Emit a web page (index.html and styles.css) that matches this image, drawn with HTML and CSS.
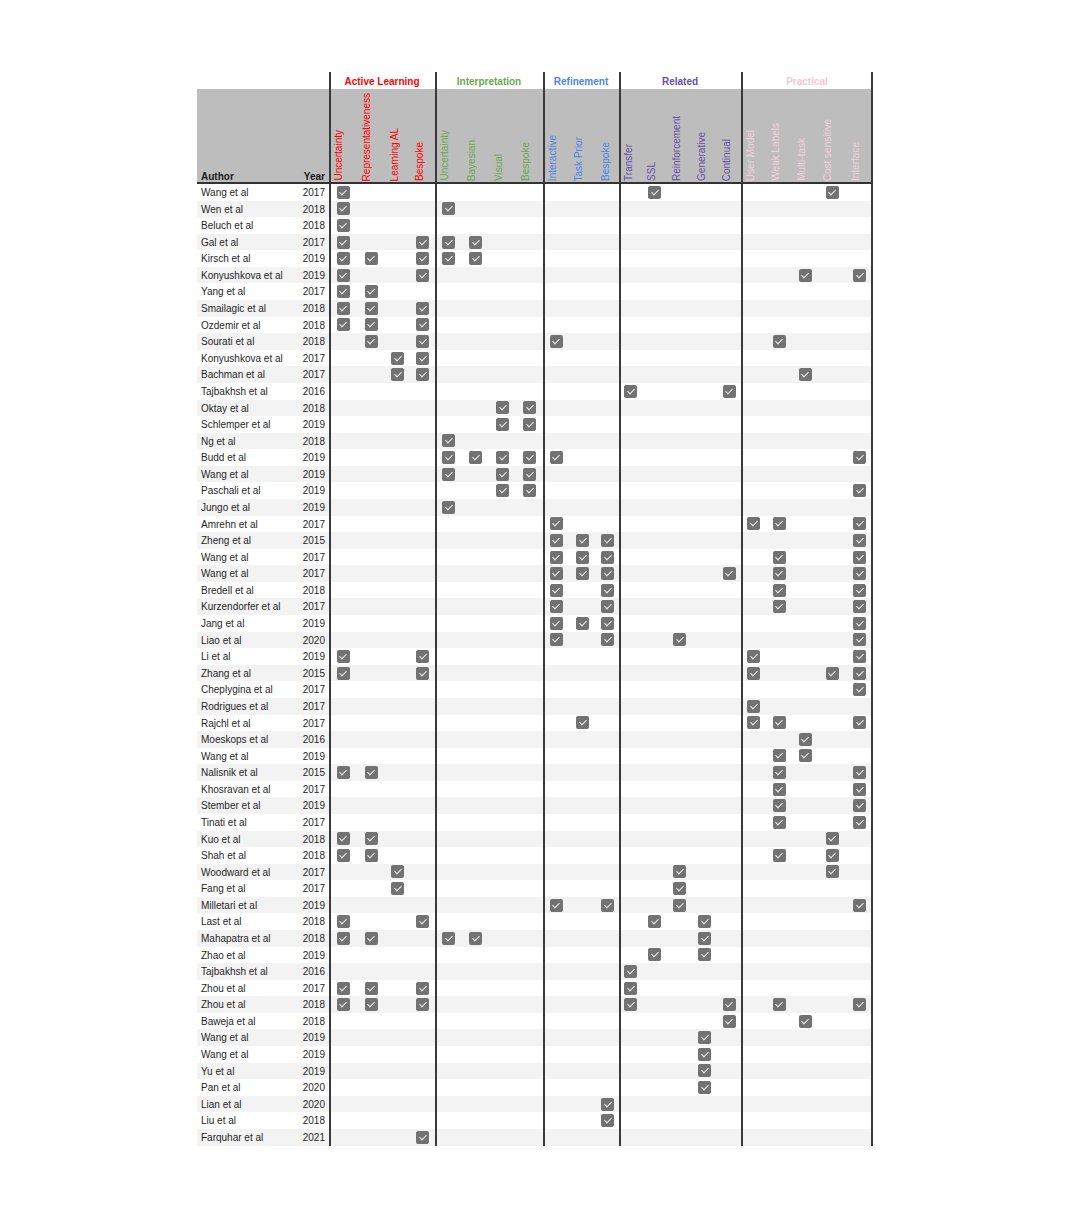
FILE: index.html
```html
<!DOCTYPE html>
<html>
<head>
<meta charset="utf-8">
<link rel="stylesheet" href="styles.css">
</head>
<body>
<div class="page">
<div class="table">
  <div class="tt">
    <span></span><span></span>
    <div class="g al"><span>Active Learning</span></div>
    <div class="g in"><span>Interpretation</span></div>
    <div class="g re"><span>Refinement</span></div>
    <div class="g rl"><span>Related</span></div>
    <div class="g pr"><span>Practical</span></div>
  </div>
  <div class="hd">
    <span class="au">Author</span><span class="yr">Year</span>
    <div class="g al"><span><b>Uncertainty</b></span><span><b>Representativeness</b></span><span><b>Learning AL</b></span><span><b>Bespoke</b></span></div>
    <div class="g in"><span><b>Uncertainty</b></span><span><b>Bayesian</b></span><span><b>Visual</b></span><span><b>Bespoke</b></span></div>
    <div class="g re"><span><b>Interactive</b></span><span><b>Task Prior</b></span><span><b>Bespoke</b></span></div>
    <div class="g rl"><span><b>Transfer</b></span><span><b>SSL</b></span><span><b>Reinforcement</b></span><span><b>Generative</b></span><span><b>Continual</b></span></div>
    <div class="g pr"><span><b>User Model</b></span><span><b>Weak Labels</b></span><span><b>Multi-task</b></span><span><b>Cost sensitive</b></span><span><b>Interface</b></span></div>
  </div>
  <div class="body">
    <div class="row"><span class="au">Wang et al</span><span class="yr">2017</span><div class="g al"><i class="k c1"></i></div><div class="g in"></div><div class="g re"></div><div class="g rl"><i class="k c2"></i></div><div class="g pr"><i class="k c4"></i></div></div>
    <div class="row"><span class="au">Wen et al</span><span class="yr">2018</span><div class="g al"><i class="k c1"></i></div><div class="g in"><i class="k c1"></i></div><div class="g re"></div><div class="g rl"></div><div class="g pr"></div></div>
    <div class="row"><span class="au">Beluch et al</span><span class="yr">2018</span><div class="g al"><i class="k c1"></i></div><div class="g in"></div><div class="g re"></div><div class="g rl"></div><div class="g pr"></div></div>
    <div class="row"><span class="au">Gal et al</span><span class="yr">2017</span><div class="g al"><i class="k c1"></i><i class="k c4"></i></div><div class="g in"><i class="k c1"></i><i class="k c2"></i></div><div class="g re"></div><div class="g rl"></div><div class="g pr"></div></div>
    <div class="row"><span class="au">Kirsch et al</span><span class="yr">2019</span><div class="g al"><i class="k c1"></i><i class="k c2"></i><i class="k c4"></i></div><div class="g in"><i class="k c1"></i><i class="k c2"></i></div><div class="g re"></div><div class="g rl"></div><div class="g pr"></div></div>
    <div class="row"><span class="au">Konyushkova et al</span><span class="yr">2019</span><div class="g al"><i class="k c1"></i><i class="k c4"></i></div><div class="g in"></div><div class="g re"></div><div class="g rl"></div><div class="g pr"><i class="k c3"></i><i class="k c5"></i></div></div>
    <div class="row"><span class="au">Yang et al</span><span class="yr">2017</span><div class="g al"><i class="k c1"></i><i class="k c2"></i></div><div class="g in"></div><div class="g re"></div><div class="g rl"></div><div class="g pr"></div></div>
    <div class="row"><span class="au">Smailagic et al</span><span class="yr">2018</span><div class="g al"><i class="k c1"></i><i class="k c2"></i><i class="k c4"></i></div><div class="g in"></div><div class="g re"></div><div class="g rl"></div><div class="g pr"></div></div>
    <div class="row"><span class="au">Ozdemir et al</span><span class="yr">2018</span><div class="g al"><i class="k c1"></i><i class="k c2"></i><i class="k c4"></i></div><div class="g in"></div><div class="g re"></div><div class="g rl"></div><div class="g pr"></div></div>
    <div class="row"><span class="au">Sourati et al</span><span class="yr">2018</span><div class="g al"><i class="k c2"></i><i class="k c4"></i></div><div class="g in"></div><div class="g re"><i class="k c1"></i></div><div class="g rl"></div><div class="g pr"><i class="k c2"></i></div></div>
    <div class="row"><span class="au">Konyushkova et al</span><span class="yr">2017</span><div class="g al"><i class="k c3"></i><i class="k c4"></i></div><div class="g in"></div><div class="g re"></div><div class="g rl"></div><div class="g pr"></div></div>
    <div class="row"><span class="au">Bachman et al</span><span class="yr">2017</span><div class="g al"><i class="k c3"></i><i class="k c4"></i></div><div class="g in"></div><div class="g re"></div><div class="g rl"></div><div class="g pr"><i class="k c3"></i></div></div>
    <div class="row"><span class="au">Tajbakhsh et al</span><span class="yr">2016</span><div class="g al"></div><div class="g in"></div><div class="g re"></div><div class="g rl"><i class="k c1"></i><i class="k c5"></i></div><div class="g pr"></div></div>
    <div class="row"><span class="au">Oktay et al</span><span class="yr">2018</span><div class="g al"></div><div class="g in"><i class="k c3"></i><i class="k c4"></i></div><div class="g re"></div><div class="g rl"></div><div class="g pr"></div></div>
    <div class="row"><span class="au">Schlemper et al</span><span class="yr">2019</span><div class="g al"></div><div class="g in"><i class="k c3"></i><i class="k c4"></i></div><div class="g re"></div><div class="g rl"></div><div class="g pr"></div></div>
    <div class="row"><span class="au">Ng et al</span><span class="yr">2018</span><div class="g al"></div><div class="g in"><i class="k c1"></i></div><div class="g re"></div><div class="g rl"></div><div class="g pr"></div></div>
    <div class="row"><span class="au">Budd et al</span><span class="yr">2019</span><div class="g al"></div><div class="g in"><i class="k c1"></i><i class="k c2"></i><i class="k c3"></i><i class="k c4"></i></div><div class="g re"><i class="k c1"></i></div><div class="g rl"></div><div class="g pr"><i class="k c5"></i></div></div>
    <div class="row"><span class="au">Wang et al</span><span class="yr">2019</span><div class="g al"></div><div class="g in"><i class="k c1"></i><i class="k c3"></i><i class="k c4"></i></div><div class="g re"></div><div class="g rl"></div><div class="g pr"></div></div>
    <div class="row"><span class="au">Paschali et al</span><span class="yr">2019</span><div class="g al"></div><div class="g in"><i class="k c3"></i><i class="k c4"></i></div><div class="g re"></div><div class="g rl"></div><div class="g pr"><i class="k c5"></i></div></div>
    <div class="row"><span class="au">Jungo et al</span><span class="yr">2019</span><div class="g al"></div><div class="g in"><i class="k c1"></i></div><div class="g re"></div><div class="g rl"></div><div class="g pr"></div></div>
    <div class="row"><span class="au">Amrehn et al</span><span class="yr">2017</span><div class="g al"></div><div class="g in"></div><div class="g re"><i class="k c1"></i></div><div class="g rl"></div><div class="g pr"><i class="k c1"></i><i class="k c2"></i><i class="k c5"></i></div></div>
    <div class="row"><span class="au">Zheng et al</span><span class="yr">2015</span><div class="g al"></div><div class="g in"></div><div class="g re"><i class="k c1"></i><i class="k c2"></i><i class="k c3"></i></div><div class="g rl"></div><div class="g pr"><i class="k c5"></i></div></div>
    <div class="row"><span class="au">Wang et al</span><span class="yr">2017</span><div class="g al"></div><div class="g in"></div><div class="g re"><i class="k c1"></i><i class="k c2"></i><i class="k c3"></i></div><div class="g rl"></div><div class="g pr"><i class="k c2"></i><i class="k c5"></i></div></div>
    <div class="row"><span class="au">Wang et al</span><span class="yr">2017</span><div class="g al"></div><div class="g in"></div><div class="g re"><i class="k c1"></i><i class="k c2"></i><i class="k c3"></i></div><div class="g rl"><i class="k c5"></i></div><div class="g pr"><i class="k c2"></i><i class="k c5"></i></div></div>
    <div class="row"><span class="au">Bredell et al</span><span class="yr">2018</span><div class="g al"></div><div class="g in"></div><div class="g re"><i class="k c1"></i><i class="k c3"></i></div><div class="g rl"></div><div class="g pr"><i class="k c2"></i><i class="k c5"></i></div></div>
    <div class="row"><span class="au">Kurzendorfer et al</span><span class="yr">2017</span><div class="g al"></div><div class="g in"></div><div class="g re"><i class="k c1"></i><i class="k c3"></i></div><div class="g rl"></div><div class="g pr"><i class="k c2"></i><i class="k c5"></i></div></div>
    <div class="row"><span class="au">Jang et al</span><span class="yr">2019</span><div class="g al"></div><div class="g in"></div><div class="g re"><i class="k c1"></i><i class="k c2"></i><i class="k c3"></i></div><div class="g rl"></div><div class="g pr"><i class="k c5"></i></div></div>
    <div class="row"><span class="au">Liao et al</span><span class="yr">2020</span><div class="g al"></div><div class="g in"></div><div class="g re"><i class="k c1"></i><i class="k c3"></i></div><div class="g rl"><i class="k c3"></i></div><div class="g pr"><i class="k c5"></i></div></div>
    <div class="row"><span class="au">Li et al</span><span class="yr">2019</span><div class="g al"><i class="k c1"></i><i class="k c4"></i></div><div class="g in"></div><div class="g re"></div><div class="g rl"></div><div class="g pr"><i class="k c1"></i><i class="k c5"></i></div></div>
    <div class="row"><span class="au">Zhang et al</span><span class="yr">2015</span><div class="g al"><i class="k c1"></i><i class="k c4"></i></div><div class="g in"></div><div class="g re"></div><div class="g rl"></div><div class="g pr"><i class="k c1"></i><i class="k c4"></i><i class="k c5"></i></div></div>
    <div class="row"><span class="au">Cheplygina et al</span><span class="yr">2017</span><div class="g al"></div><div class="g in"></div><div class="g re"></div><div class="g rl"></div><div class="g pr"><i class="k c5"></i></div></div>
    <div class="row"><span class="au">Rodrigues et al</span><span class="yr">2017</span><div class="g al"></div><div class="g in"></div><div class="g re"></div><div class="g rl"></div><div class="g pr"><i class="k c1"></i></div></div>
    <div class="row"><span class="au">Rajchl et al</span><span class="yr">2017</span><div class="g al"></div><div class="g in"></div><div class="g re"><i class="k c2"></i></div><div class="g rl"></div><div class="g pr"><i class="k c1"></i><i class="k c2"></i><i class="k c5"></i></div></div>
    <div class="row"><span class="au">Moeskops et al</span><span class="yr">2016</span><div class="g al"></div><div class="g in"></div><div class="g re"></div><div class="g rl"></div><div class="g pr"><i class="k c3"></i></div></div>
    <div class="row"><span class="au">Wang et al</span><span class="yr">2019</span><div class="g al"></div><div class="g in"></div><div class="g re"></div><div class="g rl"></div><div class="g pr"><i class="k c2"></i><i class="k c3"></i></div></div>
    <div class="row"><span class="au">Nalisnik et al</span><span class="yr">2015</span><div class="g al"><i class="k c1"></i><i class="k c2"></i></div><div class="g in"></div><div class="g re"></div><div class="g rl"></div><div class="g pr"><i class="k c2"></i><i class="k c5"></i></div></div>
    <div class="row"><span class="au">Khosravan et al</span><span class="yr">2017</span><div class="g al"></div><div class="g in"></div><div class="g re"></div><div class="g rl"></div><div class="g pr"><i class="k c2"></i><i class="k c5"></i></div></div>
    <div class="row"><span class="au">Stember et al</span><span class="yr">2019</span><div class="g al"></div><div class="g in"></div><div class="g re"></div><div class="g rl"></div><div class="g pr"><i class="k c2"></i><i class="k c5"></i></div></div>
    <div class="row"><span class="au">Tinati et al</span><span class="yr">2017</span><div class="g al"></div><div class="g in"></div><div class="g re"></div><div class="g rl"></div><div class="g pr"><i class="k c2"></i><i class="k c5"></i></div></div>
    <div class="row"><span class="au">Kuo et al</span><span class="yr">2018</span><div class="g al"><i class="k c1"></i><i class="k c2"></i></div><div class="g in"></div><div class="g re"></div><div class="g rl"></div><div class="g pr"><i class="k c4"></i></div></div>
    <div class="row"><span class="au">Shah et al</span><span class="yr">2018</span><div class="g al"><i class="k c1"></i><i class="k c2"></i></div><div class="g in"></div><div class="g re"></div><div class="g rl"></div><div class="g pr"><i class="k c2"></i><i class="k c4"></i></div></div>
    <div class="row"><span class="au">Woodward et al</span><span class="yr">2017</span><div class="g al"><i class="k c3"></i></div><div class="g in"></div><div class="g re"></div><div class="g rl"><i class="k c3"></i></div><div class="g pr"><i class="k c4"></i></div></div>
    <div class="row"><span class="au">Fang et al</span><span class="yr">2017</span><div class="g al"><i class="k c3"></i></div><div class="g in"></div><div class="g re"></div><div class="g rl"><i class="k c3"></i></div><div class="g pr"></div></div>
    <div class="row"><span class="au">Milletari et al</span><span class="yr">2019</span><div class="g al"></div><div class="g in"></div><div class="g re"><i class="k c1"></i><i class="k c3"></i></div><div class="g rl"><i class="k c3"></i></div><div class="g pr"><i class="k c5"></i></div></div>
    <div class="row"><span class="au">Last et al</span><span class="yr">2018</span><div class="g al"><i class="k c1"></i><i class="k c4"></i></div><div class="g in"></div><div class="g re"></div><div class="g rl"><i class="k c2"></i><i class="k c4"></i></div><div class="g pr"></div></div>
    <div class="row"><span class="au">Mahapatra et al</span><span class="yr">2018</span><div class="g al"><i class="k c1"></i><i class="k c2"></i></div><div class="g in"><i class="k c1"></i><i class="k c2"></i></div><div class="g re"></div><div class="g rl"><i class="k c4"></i></div><div class="g pr"></div></div>
    <div class="row"><span class="au">Zhao et al</span><span class="yr">2019</span><div class="g al"></div><div class="g in"></div><div class="g re"></div><div class="g rl"><i class="k c2"></i><i class="k c4"></i></div><div class="g pr"></div></div>
    <div class="row"><span class="au">Tajbakhsh et al</span><span class="yr">2016</span><div class="g al"></div><div class="g in"></div><div class="g re"></div><div class="g rl"><i class="k c1"></i></div><div class="g pr"></div></div>
    <div class="row"><span class="au">Zhou et al</span><span class="yr">2017</span><div class="g al"><i class="k c1"></i><i class="k c2"></i><i class="k c4"></i></div><div class="g in"></div><div class="g re"></div><div class="g rl"><i class="k c1"></i></div><div class="g pr"></div></div>
    <div class="row"><span class="au">Zhou et al</span><span class="yr">2018</span><div class="g al"><i class="k c1"></i><i class="k c2"></i><i class="k c4"></i></div><div class="g in"></div><div class="g re"></div><div class="g rl"><i class="k c1"></i><i class="k c5"></i></div><div class="g pr"><i class="k c2"></i><i class="k c5"></i></div></div>
    <div class="row"><span class="au">Baweja et al</span><span class="yr">2018</span><div class="g al"></div><div class="g in"></div><div class="g re"></div><div class="g rl"><i class="k c5"></i></div><div class="g pr"><i class="k c3"></i></div></div>
    <div class="row"><span class="au">Wang et al</span><span class="yr">2019</span><div class="g al"></div><div class="g in"></div><div class="g re"></div><div class="g rl"><i class="k c4"></i></div><div class="g pr"></div></div>
    <div class="row"><span class="au">Wang et al</span><span class="yr">2019</span><div class="g al"></div><div class="g in"></div><div class="g re"></div><div class="g rl"><i class="k c4"></i></div><div class="g pr"></div></div>
    <div class="row"><span class="au">Yu et al</span><span class="yr">2019</span><div class="g al"></div><div class="g in"></div><div class="g re"></div><div class="g rl"><i class="k c4"></i></div><div class="g pr"></div></div>
    <div class="row"><span class="au">Pan et al</span><span class="yr">2020</span><div class="g al"></div><div class="g in"></div><div class="g re"></div><div class="g rl"><i class="k c4"></i></div><div class="g pr"></div></div>
    <div class="row"><span class="au">Lian et al</span><span class="yr">2020</span><div class="g al"></div><div class="g in"></div><div class="g re"><i class="k c3"></i></div><div class="g rl"></div><div class="g pr"></div></div>
    <div class="row"><span class="au">Liu et al</span><span class="yr">2018</span><div class="g al"></div><div class="g in"></div><div class="g re"><i class="k c3"></i></div><div class="g rl"></div><div class="g pr"></div></div>
    <div class="row"><span class="au">Farquhar et al</span><span class="yr">2021</span><div class="g al"><i class="k c4"></i></div><div class="g in"></div><div class="g re"></div><div class="g rl"></div><div class="g pr"></div></div>
  </div>
</div>
</div>
</body>
</html>
```
FILE: styles.css
```css
* { box-sizing: border-box; margin: 0; padding: 0; }
body {
  background: #fff;
  font-family: "Liberation Sans", Arial, sans-serif;
  font-size: 10px;
  color: #1f1f1f;
}
.page { padding: 72px 0 0 197px; }
.table { width: 676px; }

.tt, .hd, .row {
  display: grid;
  grid-template-columns: 98px 34px 106px 108px 76px 122px 132px;
}

.g { display: grid; box-shadow: inset 2px 0 0 #3a3a3a; }
.g.pr { box-shadow: inset 2px 0 0 #3a3a3a, inset -2px 0 0 #3a3a3a; }
.al { grid-template-columns: 28px 28px 25px 25px; color: #ff0000; }
.in { grid-template-columns: 27px 27px 27px 27px; color: #6aa84f; }
.re { grid-template-columns: 26px 27px 23px; color: #4a86e8; }
.rl { grid-template-columns: 23px 25px 25px 25px 24px; color: #674ea7; }
.pr { grid-template-columns: 25px 26px 26px 28px 27px; color: #f0c6d6; }

/* group titles */
.tt { height: 17px; }
.tt .g { display: flex; align-items: center; justify-content: center; }
.tt .g span { font-weight: bold; line-height: 12px; padding-top: 3px; }
.tt .pr span { color: #efc9d7; }

/* column header */
.hd {
  height: 95px;
  background: #bdbdbd;
  border-bottom: 2px solid #333;
}
.hd .au, .hd .yr {
  align-self: end;
  font-weight: bold;
  line-height: 11px;
  color: #1a1a1a;
}
.hd .g > span {
  display: flex;
  align-items: flex-end;
  padding: 0 0 1px 3.5px;
}
.hd .g > span > b {
  writing-mode: vertical-rl;
  transform: rotate(180deg);
  line-height: 12px;
  font-weight: normal;
  white-space: nowrap;
}
.hd .pr > span > b { color: #f3d0dd; }

/* rows */
.row { height: 16.58px; }
.body .row:nth-child(even) { background: #f3f3f3; }
.row .au, .row .yr { padding-top: 1px; }
.au { padding-left: 4px; line-height: 16.58px; white-space: nowrap; }
.yr { text-align: right; padding-right: 4px; line-height: 16.58px; }
.row .g { grid-template-rows: 16.58px; }

.k {
  grid-row: 1;
  align-self: center;
  justify-self: center;
  width: 13px;
  height: 13px;
  border-radius: 2px;
  background: #727272;
  display: flex;
  align-items: center;
  justify-content: center;
}
.k::after {
  content: "";
  width: 3px;
  height: 6px;
  margin-top: -2px;
  border: solid #eeeeee;
  border-width: 0 1.5px 1.5px 0;
  transform: rotate(45deg);
}
.c1 { grid-column: 1; }
.c2 { grid-column: 2; }
.c3 { grid-column: 3; }
.c4 { grid-column: 4; }
.c5 { grid-column: 5; }
```
